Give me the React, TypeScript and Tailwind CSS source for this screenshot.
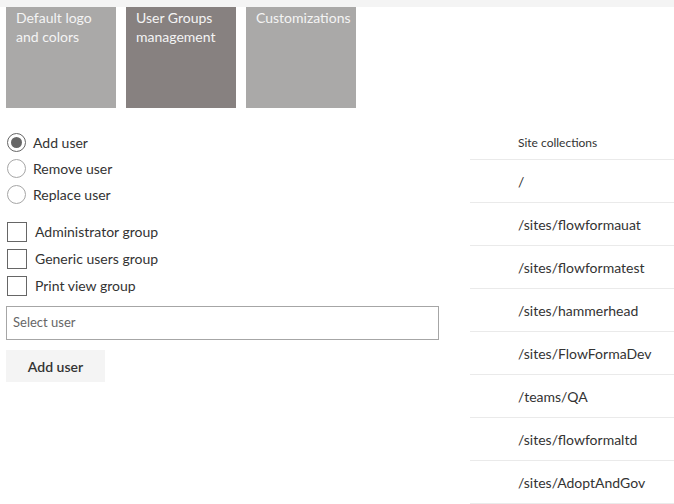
import React from "react";

const TILES = [
    { label: "Default logo and colors", bg: "bg-[#aaa9a8]" },
    { label: "User Groups management", bg: "bg-[#878180]" },
    { label: "Customizations", bg: "bg-[#aaa9a8]" },
];

const ACTIONS = ["Add user", "Remove user", "Replace user"];
const GROUPS = ["Administrator group", "Generic users group", "Print view group"];
const SITES = [
    "/",
    "/sites/flowformauat",
    "/sites/flowformatest",
    "/sites/hammerhead",
    "/sites/FlowFormaDev",
    "/teams/QA",
    "/sites/flowformaltd",
    "/sites/AdoptAndGov",
];

export default function App() {
    return (
        <div className="w-[674px] h-[504px] overflow-hidden bg-white text-[#333] font-['Segoe_UI','Lato',sans-serif]">
            <div className="h-[7px] bg-[#f4f4f4]" />

            {/* Tiles */}
            <div className="flex gap-[10px] px-[6px]">
                {TILES.map((t) => (
                    <div key={t.label} className={`w-[110px] h-[101px] ${t.bg} px-[10px] pt-[1px] text-[14px] leading-[19px] text-[#f4f4f4]`}>
                        {t.label}
                    </div>
                ))}
            </div>

            <div className="flex">
                {/* Left form */}
                <div className="w-[470px] pl-[6px] pt-[21px]">
                    <div className="flex flex-col">
                        {ACTIONS.map((a, i) => (
                            <label key={a} className="flex items-center h-[26px] gap-[7px] pl-[1px]">
                                <span className={`w-[19px] h-[19px] rounded-full border flex items-center justify-center ${i === 0 ? "border-[#666]" : "border-[#a6a6a6]"}`}>
                                    {i === 0 && <span className="w-[11px] h-[11px] rounded-full bg-[#666]" />}
                                </span>
                                <span className="text-[14px]">{a}</span>
                            </label>
                        ))}
                    </div>

                    <div className="flex flex-col mt-[11px]">
                        {GROUPS.map((g) => (
                            <label key={g} className="flex items-center h-[27px] gap-[8px] pl-[1px]">
                                <span className="w-[20px] h-[20px] border border-[#666]" />
                                <span className="text-[14px]">{g}</span>
                            </label>
                        ))}
                    </div>

                    <div className="mt-[7px] w-[433px] h-[34px] border border-[#a6a6a6] flex items-center px-[6px] text-[13px] text-[#666]">
                        Select user
                    </div>

                    <button className="mt-[10px] w-[99px] h-[32px] bg-[#f4f4f4] text-[14px] font-semibold text-[#333]">
                        Add user
                    </button>
                </div>

                {/* Site collections */}
                <div className="w-[204px] pt-[18px]">
                    <div className="h-[34px] border-b border-[#eaeaea] flex items-center pl-[48px] text-[12px]">
                        Site collections
                    </div>
                    {SITES.map((s) => (
                        <div key={s} className="h-[43px] border-b border-[#eaeaea] flex items-center pl-[48px] text-[14px]">
                            {s}
                        </div>
                    ))}
                </div>
            </div>
        </div>
    );
}
